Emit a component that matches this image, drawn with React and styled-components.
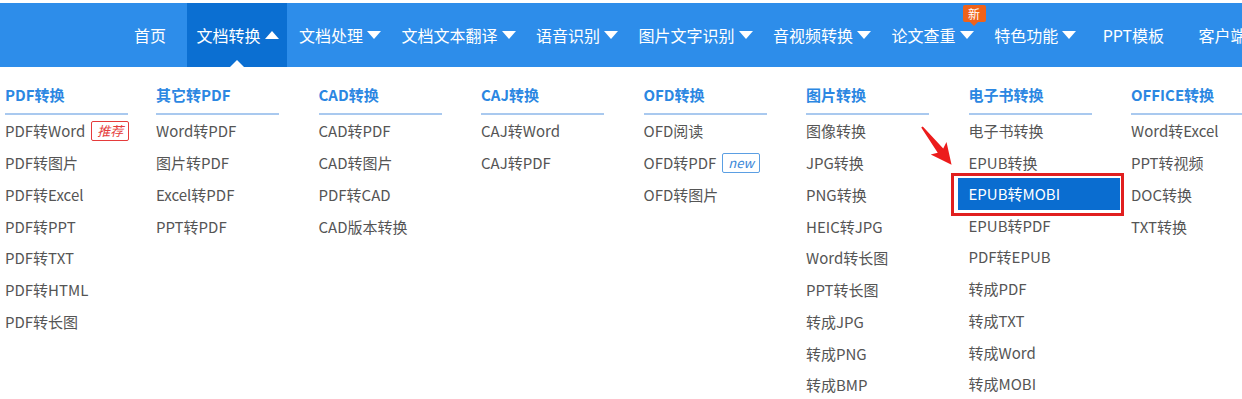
import React from 'react';
import styled, { createGlobalStyle, css } from 'styled-components';

const GlobalStyle = createGlobalStyle`
  body {
    margin: 0;
    background: #fff;
    font-family: "Noto Sans CJK SC", "Noto Sans", sans-serif;
    overflow: hidden;
  }
`;

const navItems = [
  { label: '首页', first: true },
  { label: '文档转换', arrow: 'up', active: true },
  { label: '文档处理', arrow: 'down' },
  { label: '文档文本翻译', arrow: 'down' },
  { label: '语音识别', arrow: 'down' },
  { label: '图片文字识别', arrow: 'down' },
  { label: '音视频转换', arrow: 'down' },
  { label: '论文查重', arrow: 'down', badge: '新' },
  { label: '特色功能', arrow: 'down' },
  { label: 'PPT模板' },
  { label: '客户端' },
];

const columns = [
  {
    title: 'PDF转换',
    links: [
      { text: 'PDF转Word', tag: '推荐', tone: 'red' },
      { text: 'PDF转图片' },
      { text: 'PDF转Excel' },
      { text: 'PDF转PPT' },
      { text: 'PDF转TXT' },
      { text: 'PDF转HTML' },
      { text: 'PDF转长图' },
    ],
  },
  {
    title: '其它转PDF',
    links: [{ text: 'Word转PDF' }, { text: '图片转PDF' }, { text: 'Excel转PDF' }, { text: 'PPT转PDF' }],
  },
  {
    title: 'CAD转换',
    links: [{ text: 'CAD转PDF' }, { text: 'CAD转图片' }, { text: 'PDF转CAD' }, { text: 'CAD版本转换' }],
  },
  {
    title: 'CAJ转换',
    links: [{ text: 'CAJ转Word' }, { text: 'CAJ转PDF' }],
  },
  {
    title: 'OFD转换',
    links: [{ text: 'OFD阅读' }, { text: 'OFD转PDF', tag: 'new', tone: 'blue' }, { text: 'OFD转图片' }],
  },
  {
    title: '图片转换',
    links: [
      { text: '图像转换' },
      { text: 'JPG转换' },
      { text: 'PNG转换' },
      { text: 'HEIC转JPG' },
      { text: 'Word转长图' },
      { text: 'PPT转长图' },
      { text: '转成JPG' },
      { text: '转成PNG' },
      { text: '转成BMP' },
    ],
  },
  {
    title: '电子书转换',
    links: [
      { text: '电子书转换' },
      { text: 'EPUB转换' },
      { text: 'EPUB转MOBI', selected: true },
      { text: 'EPUB转PDF' },
      { text: 'PDF转EPUB' },
      { text: '转成PDF' },
      { text: '转成TXT' },
      { text: '转成Word' },
      { text: '转成MOBI' },
    ],
  },
  {
    title: 'OFFICE转换',
    links: [{ text: 'Word转Excel' }, { text: 'PPT转视频' }, { text: 'DOC转换' }, { text: 'TXT转换' }],
  },
];

const Page = styled.div`
  width: 1242px;
  height: 399px;
  overflow: hidden;
  padding-top: 3px;
  box-sizing: border-box;
  background: #fff;
`;

const NavBar = styled.nav`
  height: 64px;
  background: #2d8dea;
  display: flex;
  align-items: stretch;
  padding-left: 118px;
  gap: 2.5px;
`;

const NavItem = styled.div`
  position: relative;
  display: flex;
  align-items: center;
  padding: ${(p) => (p.$arrow ? '0 7px 0 10px' : p.$first ? '0 18px 0 16px' : '0 16px')};
  color: #fff;
  font-size: 16px;
  white-space: nowrap;
  flex: none;
  ${(p) =>
    p.$active &&
    css`
      background: #0b6fd2;
      &::after {
        content: '';
        position: absolute;
        left: 50%;
        bottom: 0;
        margin-left: -7px;
        border-left: 7px solid transparent;
        border-right: 7px solid transparent;
        border-bottom: 7px solid #fff;
      }
    `}
`;

const Caret = styled.svg`
  width: 16px;
  height: 10px;
  margin-left: 3px;
  flex: none;
`;

const NewBadge = styled.span`
  position: absolute;
  top: 2px;
  right: -4px;
  width: 23px;
  height: 17px;
  background: #f0621a;
  color: #fff;
  font-size: 12px;
  line-height: 17px;
  text-align: center;
  border-radius: 2px;
  &::after {
    content: '';
    position: absolute;
    left: 50%;
    bottom: -4px;
    margin-left: -4px;
    border-left: 4px solid transparent;
    border-right: 4px solid transparent;
    border-top: 4px solid #f0621a;
  }
`;

const Dropdown = styled.div`
  position: relative;
  display: grid;
  grid-template-columns: 151px repeat(7, 162.5px);
  padding: 16px 0 0 5px;
`;

const Column = styled.div`
  display: flex;
  flex-direction: column;
`;

const ColumnTitle = styled.div`
  width: 123px;
  height: 24px;
  line-height: 24px;
  padding-bottom: 6px;
  border-bottom: 2px solid #a9c9ef;
  color: #2b87e2;
  font-size: 15px;
  font-weight: bold;
  white-space: nowrap;
`;

const LinkItem = styled.div`
  position: relative;
  display: flex;
  align-items: center;
  height: 31.75px;
  font-size: 15px;
  color: #555;
  white-space: nowrap;
  ${(p) =>
    p.$selected &&
    css`
      margin-left: -11px;
      padding-left: 11px;
      width: 151px;
      height: 32px;
      margin-top: -1px;
      margin-bottom: -0.25px;
      background: #0a6dd0;
      color: #fff;
      &::after {
        content: '';
        position: absolute;
        left: -7px;
        right: -4px;
        top: -5px;
        bottom: -6px;
        border: 3px solid #e11f1f;
      }
    `}
`;

const Tag = styled.span`
  margin-left: 6px;
  padding: 0 5px;
  height: 18px;
  line-height: 18px;
  font-size: 13px;
  font-style: italic;
  border: 1px solid ${(p) => (p.$tone === 'red' ? '#e53b3b' : '#5b9fe3')};
  color: ${(p) => (p.$tone === 'red' ? '#e53b3b' : '#3a88d8')};
  border-radius: 2px;
`;

const PointerArrow = styled.svg`
  position: absolute;
  left: 920px;
  top: 58px;
  width: 40px;
  height: 46px;
  overflow: visible;
`;

function NavCaret({ dir }) {
  return (
    <Caret viewBox="0 0 16 10">
      {dir === 'up' ? <path d="M1 9 L8 1 L15 9 Z" fill="#fff" /> : <path d="M1 1 L15 1 L8 9 Z" fill="#fff" />}
    </Caret>
  );
}

export default function App() {
  return (
    <>
      <GlobalStyle />
      <Page>
        <NavBar>
          {navItems.map((item) => (
            <NavItem key={item.label} $arrow={!!item.arrow} $active={item.active} $first={item.first}>
              {item.label}
              {item.arrow && <NavCaret dir={item.arrow} />}
              {item.badge && <NewBadge>{item.badge}</NewBadge>}
            </NavItem>
          ))}
        </NavBar>
        <Dropdown>
          {columns.map((col) => (
            <Column key={col.title}>
              <ColumnTitle>{col.title}</ColumnTitle>
              {col.links.map((link) => (
                <LinkItem key={link.text} $selected={link.selected}>
                  {link.text}
                  {link.tag && <Tag $tone={link.tone}>{link.tag}</Tag>}
                </LinkItem>
              ))}
            </Column>
          ))}
          <PointerArrow viewBox="0 0 40 46">
            <g transform="translate(2,2) rotate(52)">
              <polygon points="0,-1 30,-3.5 27,-10 48,0 27,10 30,3.5 0,1" fill="#ec1c1c" />
            </g>
          </PointerArrow>
        </Dropdown>
      </Page>
    </>
  );
}
